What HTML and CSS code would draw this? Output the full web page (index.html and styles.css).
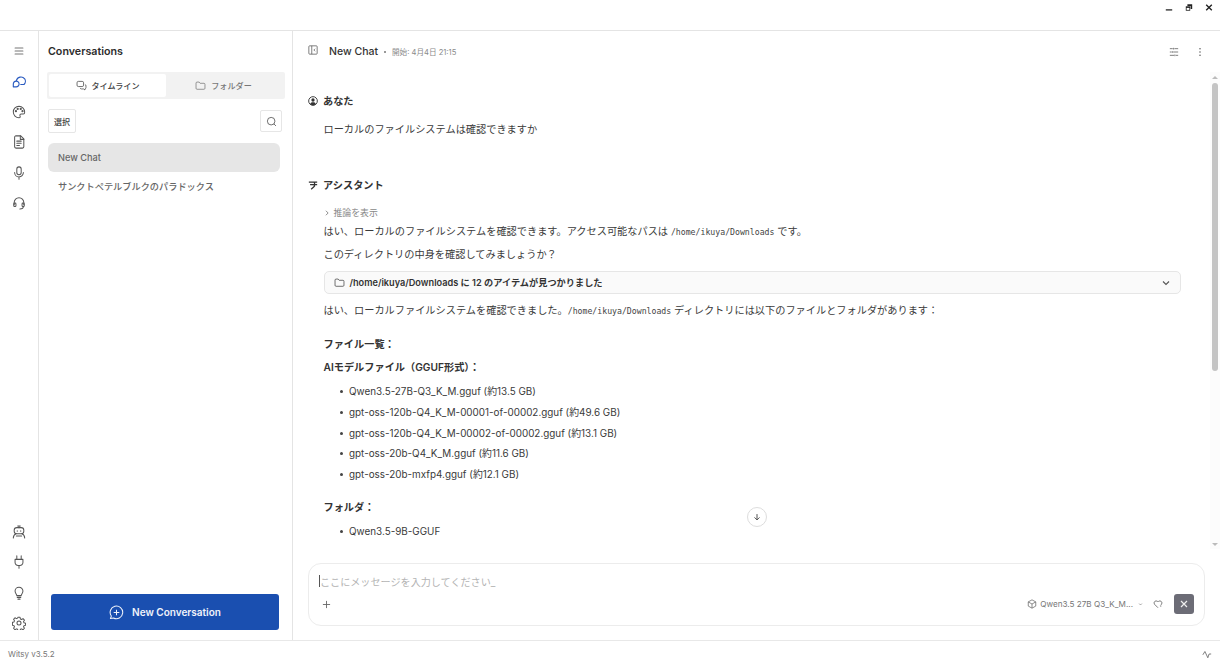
FILE: index.html
```html
<!DOCTYPE html>
<html lang="ja">
<head>
<meta charset="utf-8">
<title>Witsy</title>
<link rel="stylesheet" href="styles.css">
</head>
<body>
<div class="app">
  <header class="titlebar">
    <svg class="win" viewBox="0 0 10 10"><path d="M1 8h8" stroke-width="1.6"/></svg>
    <svg class="win" viewBox="0 0 10 10"><path d="M3 1h6v6H7V3H3z" fill="#222" stroke="none"/><rect x="1" y="3.5" width="5.5" height="5.5" fill="#222" stroke="none"/><rect x="2" y="5.5" width="3.5" height="2.5" fill="#fff" stroke="none"/></svg>
    <svg class="win" viewBox="0 0 10 10"><path d="M1.5 1.5l7 7M8.5 1.5l-7 7" stroke-width="1.7"/></svg>
  </header>
  <div class="body">
    <nav class="rail">
      <div class="rail-group">
        <svg class="ri menu" viewBox="0 0 16 16"><path d="M3.500 4.500h9M3.500 8h9M3.500 11.500h9"/></svg>
        <svg class="ri blue" viewBox="0 0 16 16"><path d="M5 7.500a5.400 5.400 0 0 1 9.500-2c1.300 2 .8 5-.8 6.500H10"/><path d="M1.500 11.500a3.300 3.300 0 1 1 3.300 3.200H1.500z"/></svg>
        <svg class="ri" viewBox="0 0 16 16"><path d="M8 1.500a6.500 6.500 0 1 0 0 13c1.300 0 1.700-1 1.200-2-.5-1.200.2-2.200 1.400-2.200h2.300c1 0 1.600-.7 1.600-2A6.600 6.600 0 0 0 8 1.500z"/><circle cx="4.500" cy="7" r=".7"/><circle cx="6.500" cy="4.500" r=".7"/><circle cx="10" cy="4.500" r=".7"/><circle cx="12" cy="7" r=".7"/></svg>
        <svg class="ri" viewBox="0 0 16 16"><path d="M3 2.500A1.500 1.500 0 0 1 4.500 1H10l3.500 3.500v9a1.500 1.500 0 0 1-1.500 1.500H4.500A1.500 1.500 0 0 1 3 13.500z"/><path d="M5.500 7h5M5.500 9.500h5M5.500 12h3M9.500 1v4h4"/></svg>
        <svg class="ri" viewBox="0 0 16 16"><rect x="5.500" y="1" width="5" height="9" rx="2.500"/><path d="M3 7.500a5 5 0 0 0 10 0M8 12.500V15"/></svg>
        <svg class="ri" viewBox="0 0 16 16"><path d="M2.500 10V7.500a5.500 5.500 0 0 1 11 0V10"/><rect x="2" y="8" width="2.500" height="4" rx="1"/><rect x="11.500" y="8" width="2.500" height="4" rx="1"/><path d="M13 12c0 2-2 2.800-4 2.800"/></svg>
      </div>
      <div class="rail-group">
        <svg class="ri" viewBox="0 0 16 16"><rect x="2.500" y="3" width="11" height="7" rx="3"/><path d="M8 3V1.200M6.500 1.200h3M6 6.500v.5M10 6.500v.5M4.500 10c-2 1-3 2.500-3 4.800M11.500 10c2 1 3 2.500 3 4.800M5 12.500h6"/></svg>
        <svg class="ri" viewBox="0 0 16 16"><path d="M5.500 1v4M10.500 1v4M3.500 5h9v3.500a3.500 3.500 0 0 1-3.500 3.500H7a3.500 3.500 0 0 1-3.500-3.500zM8 12v3"/></svg>
        <svg class="ri" viewBox="0 0 16 16"><path d="M5.500 11c0-1.500-2-2.500-2-5.200a4.500 4.500 0 0 1 9 0c0 2.700-2 3.700-2 5.200zM6 13h4M6.800 15h2.400"/></svg>
        <svg class="ri" viewBox="0 0 16 16"><circle cx="8" cy="8" r="2.300"/><path d="M6.800 1.500h2.400l.4 1.900 1.300.6 1.700-1 1.600 1.800-1 1.600.5 1.400 1.800.4v2.400l-1.800.4-.5 1.300 1 1.700-1.600 1.700-1.700-1-1.300.5-.4 1.900H6.800l-.4-1.900-1.300-.5-1.700 1-1.600-1.700 1-1.700-.5-1.300-1.800-.4V7.200l1.800-.4.5-1.400-1-1.600 1.600-1.800 1.700 1 1.300-.6z"/></svg>
      </div>
    </nav>

    <aside class="side">
      <h2 class="side-title">Conversations</h2>
      <div class="tabs">
        <div class="tab active">
          <svg class="ti" viewBox="0 0 16 16"><rect x="1.500" y="2" width="9.500" height="7.500" rx="2"/><path d="M13 6.500c1 .3 1.500 1 1.500 2v2.500c0 1-.6 1.800-1.500 2v1.500L11 13H8c-1 0-1.800-.6-2-1.500"/></svg>
          <span>タイムライン</span>
        </div>
        <div class="tab">
          <svg class="ti" viewBox="0 0 16 16"><path d="M1.500 4.500A1.500 1.500 0 0 1 3 3h3l1.500 1.800H13a1.500 1.500 0 0 1 1.500 1.500V12A1.500 1.500 0 0 1 13 13.500H3A1.500 1.500 0 0 1 1.500 12z"/></svg>
          <span>フォルダー</span>
        </div>
      </div>
      <div class="tools">
        <button class="btn-select">選択</button>
        <button class="btn-search"><svg class="ti dark" viewBox="0 0 16 16"><circle cx="7.500" cy="7.500" r="5.500"/><path d="M11.500 11.500L14.500 14.500"/></svg></button>
      </div>
      <ul class="convs">
        <li class="conv selected">New Chat</li>
        <li class="conv">サンクトペテルブルクのパラドックス</li>
      </ul>
      <button class="new-conv">
        <svg class="nc-icon" viewBox="0 0 16 16"><path d="M1.500 14.500l1-2.700a6.700 6.700 0 1 1 2.300 2z"/><path d="M8 5v6M5 8h6"/></svg>
        <span>New Conversation</span>
      </button>
    </aside>

    <main class="main">
      <div class="head">
        <svg class="hi panel" viewBox="0 0 12 12"><rect x="1" y="1" width="10" height="10" rx="1"/><path d="M4.500 1v10M8.500 4.500L7 6l1.500 1.500"/></svg>
        <span class="head-title">New Chat</span>
        <span class="head-dot"></span>
        <span class="head-date">開始: 4月4日 21:15</span>
        <div class="head-actions">
          <svg class="hi" viewBox="0 0 12 12"><path d="M1 2h3.500M6.500 2H11M1 6h2M5 6h6M1 10h5M8 10h3M5.500 1v2M4 5v2M7 9v2"/></svg>
          <svg class="hi dots" viewBox="0 0 12 12"><circle cx="6" cy="2" r=".9"/><circle cx="6" cy="6" r=".9"/><circle cx="6" cy="10" r=".9"/></svg>
        </div>
      </div>
      <div class="chat-wrap">
        <div class="chat">
          <div class="who first">
            <svg class="who-ic" viewBox="0 0 12 12"><circle cx="6" cy="6" r="5.200"/><circle class="fill" cx="6" cy="4.800" r="2"/><path class="fill" d="M2.600 9.500c.6-1.500 2-2 3.400-2s2.800.5 3.400 2C8.400 10.600 7.200 11 6 11s-2.400-.4-3.400-1.500z"/></svg>
            <span>あなた</span>
          </div>
          <p class="msg user">ローカルのファイルシステムは確認できますか</p>
          <div class="who second">
            <svg class="who-ic" viewBox="0 0 12 12"><path class="thick" d="M1 2.500h10M2.500 5.500h8.500M5 5.500c3 0 4 1.200 1.800 3l-3 2.500M7 2.500c1.200 1 1.200 2 .6 3"/></svg>
            <span>アシスタント</span>
          </div>
          <div class="reason"><svg class="chev" viewBox="0 0 8 8"><path d="M2.500 1l3 3-3 3"/></svg><span>推論を表示</span></div>
          <p class="msg">はい、ローカルのファイルシステムを確認できます。アクセス可能なパスは <code>/home/ikuya/Downloads</code> です。</p>
          <p class="msg after">このディレクトリの中身を確認してみましょうか？</p>
          <div class="tool">
            <svg class="ti dark" viewBox="0 0 16 16"><path d="M1.500 4.500A1.500 1.500 0 0 1 3 3h3l1.500 1.800H13a1.500 1.500 0 0 1 1.500 1.500V12A1.500 1.500 0 0 1 13 13.500H3A1.500 1.500 0 0 1 1.500 12z"/></svg>
            <span class="tool-text">/home/ikuya/Downloads に 12 のアイテムが見つかりました</span>
            <svg class="tool-chev" viewBox="0 0 8 8"><path d="M1 2.500l3 3 3-3"/></svg>
          </div>
          <p class="msg after-tool">はい、ローカルファイルシステムを確認できました。<code>/home/ikuya/Downloads</code> ディレクトリには以下のファイルとフォルダがあります：</p>
          <p class="msg strong h1">ファイル一覧：</p>
          <p class="msg strong h2">AIモデルファイル（GGUF形式）：</p>
          <ul class="files">
            <li>Qwen3.5-27B-Q3_K_M.gguf (約13.5 GB)</li>
            <li>gpt-oss-120b-Q4_K_M-00001-of-00002.gguf (約49.6 GB)</li>
            <li>gpt-oss-120b-Q4_K_M-00002-of-00002.gguf (約13.1 GB)</li>
            <li>gpt-oss-20b-Q4_K_M.gguf (約11.6 GB)</li>
            <li>gpt-oss-20b-mxfp4.gguf (約12.1 GB)</li>
          </ul>
          <p class="msg strong h1 folder">フォルダ：</p>
          <ul class="files">
            <li>Qwen3.5-9B-GGUF</li>
          </ul>
        </div>
        <div class="scrollbar">
          <span class="arrow up"></span>
          <span class="thumb"></span>
          <span class="arrow down"></span>
        </div>
        <button class="to-bottom"><svg viewBox="0 0 12 12"><path d="M6 2.500v7M3 6.500l3 3 3-3"/></svg></button>
      </div>
      <div class="composer">
        <div class="input-line"><span class="caret"></span><span class="placeholder">ここにメッセージを入力してください_</span></div>
        <div class="composer-row">
          <svg class="plus" viewBox="0 0 10 10"><path d="M5 1v8M1 5h8"/></svg>
          <svg class="hi model-ic" viewBox="0 0 12 12"><path d="M6 1l4.500 2.500v5L6 11 1.500 8.500v-5zM1.500 3.500L6 6l4.500-2.500M6 6v5"/></svg>
          <span class="model">Qwen3.5 27B Q3_K_M...</span>
          <svg class="model-chev" viewBox="0 0 8 8"><path d="M2.500 3l1.500 1.500L5.500 3"/></svg>
          <svg class="hi heart" viewBox="0 0 12 12"><path d="M6 10.500L1.800 6.300a2.500 2.500 0 0 1 3.500-3.500l.7.7.7-.7a2.500 2.500 0 0 1 3.500 3.500L9 7.500"/><path d="M8.500 8.500h1.500"/></svg>
          <button class="stop"><svg viewBox="0 0 10 10"><path d="M2 2l6 6M8 2l-6 6"/></svg></button>
        </div>
      </div>
    </main>
  </div>
  <footer class="status">
    <span>Witsy v3.5.2</span>
    <svg class="pulse" viewBox="0 0 12 12"><path d="M1 7l2.500-4L7 10.500 8.500 6H11"/></svg>
  </footer>
</div>
</body>
</html>
```

FILE: styles.css
```css
* { box-sizing: border-box; }
html, body { margin: 0; height: 100%; }
body {
  background: #fff;
  color: #333;
  font-family: Inter, "Noto Sans CJK JP", sans-serif;
  overflow: hidden;
}
svg { display: block; fill: none; stroke: currentColor; stroke-width: 1.1; flex: none; }
ul { list-style: none; margin: 0; padding: 0; }
p { margin: 0; }
button { font-family: inherit; cursor: pointer; }

.app { width: 1220px; height: 666px; display: flex; flex-direction: column; }

.titlebar {
  height: 31px; flex: none;
  border-bottom: 1px solid #e4e4e4;
  display: flex; justify-content: flex-end; align-items: flex-start;
  gap: 12px; padding: 3px 7px 0 0; color: #222;
}
.win { width: 8px; height: 9px; stroke-linecap: butt; }

.body { flex: 1; display: flex; min-height: 0; }

.rail {
  width: 39px; flex: none;
  border-right: 1px solid #e4e4e4;
  display: flex; flex-direction: column; justify-content: space-between;
  padding: 13px 0 10px; color: #555;
}
.rail-group { display: flex; flex-direction: column; align-items: center; gap: 16.4px; }
.ri { width: 14px; height: 14px; stroke-width: 1.15; stroke-linejoin: round; stroke-linecap: round; }
.ri.menu { color: #777; }
.ri.blue { color: #2a5bc0; stroke-width: 1.3; }

.side {
  width: 254px; flex: none;
  border-right: 1px solid #e4e4e4;
  display: flex; flex-direction: column;
  padding: 0 7px 10px 8px;
}
.side-title { margin: 14px 0 0 1px; font-size: 10.7px; line-height: 13px; font-weight: 600; color: #2c2c2c; }
.tabs {
  margin-top: 14px; height: 27px;
  background: #f2f2f2; border-radius: 2px;
  display: flex; padding: 2px;
}
.tab {
  flex: 1; display: flex; align-items: center; justify-content: center; gap: 5px;
  font-size: 8.1px; font-weight: 500; color: #777; border-radius: 2px;
}
.tab.active { background: #fff; color: #444; flex: 0 0 117px; }
.tab:last-child { padding-right: 2px; }
.ti { width: 11px; height: 11px; color: #777; stroke-linejoin: round; }
.tab.active .ti, .ti.dark { color: #444; }

.tools { display: flex; justify-content: space-between; align-items: center; margin: 10px 3px 10px 1px; }
.btn-select {
  width: 28px; height: 24px; padding: 0;
  border: 1px solid #e6e6e6; border-radius: 2px; background: #fff;
  font-size: 8px; color: #444; font-weight: 500;
}
.btn-search {
  width: 22px; height: 22px; padding: 0;
  border: 1px solid #e6e6e6; border-radius: 2px; background: #fff;
  display: flex; align-items: center; justify-content: center;
}

.convs { flex: 1; margin: 0 5px 0 1px; }
.conv {
  height: 29px; line-height: 29px; padding-left: 10px;
  font-size: 9.2px; font-weight: 500; color: #666; border-radius: 6px;
}
.conv.selected { background: #e6e6e6; }

.new-conv {
  margin: 0 6px 0 4px; height: 36px;
  background: #1a4fb0; color: #f0f3fa; border: 0; border-radius: 3px;
  display: flex; align-items: center; justify-content: center; gap: 8px;
  font-size: 10px; font-weight: 600;
}
.nc-icon { width: 15px; height: 15px; stroke-width: 1.1; stroke-linejoin: round; }

.main { flex: 1; min-width: 0; display: flex; flex-direction: column; }
.head {
  height: 41px; flex: none;
  display: flex; align-items: center;
  padding: 0 15px;
}
.hi { width: 10px; height: 10px; color: #555; stroke-width: .9; }
.panel { margin-top: -3px; }
.head-title { margin-left: 11px; font-size: 10.5px; font-weight: 500; color: #333; }
.head-dot { width: 2px; height: 2px; border-radius: 50%; background: #777; margin: 1px 6px 0 6px; }
.head-date { font-size: 7.6px; color: #8a8a8a; }
.head-actions { margin-left: auto; display: flex; gap: 16px; }
.dots { fill: #555; stroke: none; }

.chat-wrap { position: relative; height: 477px; flex: none; display: flex; }
.chat {
  flex: 1; min-width: 0; overflow: hidden;
  padding: 0 29px 0 15px;
  font-size: 10.2px; line-height: 18px; color: #3a3a3a;
}
.who { display: flex; align-items: center; gap: 5px; font-weight: 600; color: #333; height: 18px; }
.who.first { margin-top: 20px; }
.who.second { margin-top: 38px; }
.who-ic { width: 10px; height: 10px; color: #333; margin-top: -1px; }
.who-ic .fill { fill: #333; stroke: none; }
.who-ic .thick { stroke-width: 1.5; }

.msg { margin-left: 15.5px; }
.msg.user { margin-top: 10px; }
.reason {
  margin: 10px 0 0 15.5px; height: 18px;
  display: flex; align-items: center; gap: 4px;
  font-size: 8.9px; color: #888;
}
.chev { width: 6px; height: 8px; color: #777; }
.msg.after { margin-top: 4px; }
.msg.after-tool { margin-top: 7px; }
code { font-family: "DejaVu Sans Mono", monospace; font-size: 8.2px; color: #444; }
.tool {
  margin: 8px 0 0 15.5px; height: 23px;
  border: 1px solid #e6e6e6; border-radius: 5px; background: #fafafa;
  display: flex; align-items: center; padding: 0 10px 0 9px;
}
.tool-text { margin-left: 5px; font-size: 9.2px; font-weight: 600; color: #333; }
.tool-chev { margin-left: auto; width: 8px; height: 8px; color: #555; }
.strong { font-weight: 600; color: #333; }
.h1 { margin-top: 15px; }
.h2 { margin-top: 5px; }
.folder { margin-top: 15px; }
.files { margin: 6px 0 0 41px; color: #3a3a3a; font-size: 9.9px; }
.files li { position: relative; margin-bottom: 2.8px; }
.files li::before {
  content: ""; position: absolute; left: -9px; top: 8px;
  width: 3px; height: 3px; border-radius: 50%; background: #444;
}

.scrollbar { width: 10px; flex: none; display: flex; flex-direction: column; align-items: center; padding-top: 4px; background: #fcfcfc; }
.arrow { width: 0; height: 0; border-left: 3px solid transparent; border-right: 3px solid transparent; flex: none; }
.arrow.up { border-bottom: 3px solid #bbb; }
.arrow.down { border-top: 3px solid #bbb; margin-top: auto; margin-bottom: 3px; }
.thumb { width: 6px; height: 288px; background: #c4c4c4; border-radius: 3px; margin-top: 4px; }

.to-bottom {
  position: absolute; left: 454px; top: 435px;
  width: 20px; height: 20px; padding: 0;
  border: 1px solid #ddd; border-radius: 50%; background: #fff;
  display: flex; align-items: center; justify-content: center; color: #444;
}
.to-bottom svg { width: 10px; height: 10px; }

.composer {
  margin: 14px 15px 0 15px; height: 63px; flex: none;
  border: 1px solid #ececec; border-radius: 13px;
  padding: 10px 10px 0 10px;
  display: flex; flex-direction: column;
}
.input-line { display: flex; align-items: center; height: 14px; }
.caret { width: 1px; height: 12px; background: #555; }
.placeholder { font-size: 10.1px; color: #b4b4b4; }
.composer-row { display: flex; align-items: center; height: 20px; margin-top: 6px; }
.plus { width: 9px; height: 9px; margin-left: 3px; color: #666; stroke-width: 1; }
.model-ic { margin-left: auto; color: #666; }
.model { margin-left: 3px; font-size: 8.15px; color: #777; white-space: nowrap; }
.model-chev { width: 7px; height: 7px; margin-left: 3.5px; color: #999; }
.heart { margin-left: 9.5px; color: #555; }
.stop {
  margin-left: 11px; width: 20px; height: 20px; padding: 0; border: 0;
  background: #6c6c76; border-radius: 3px;
  display: flex; align-items: center; justify-content: center; color: #eee;
}
.stop svg { width: 10px; height: 10px; stroke-width: 1.2; }

.status {
  flex: none; height: 26px;
  border-top: 1px solid #e8e8e8;
  display: flex; align-items: center; justify-content: space-between;
  padding: 0 8px; font-size: 8px; color: #777;
}
.pulse { width: 10px; height: 10px; color: #555; stroke-width: .9; }
```
